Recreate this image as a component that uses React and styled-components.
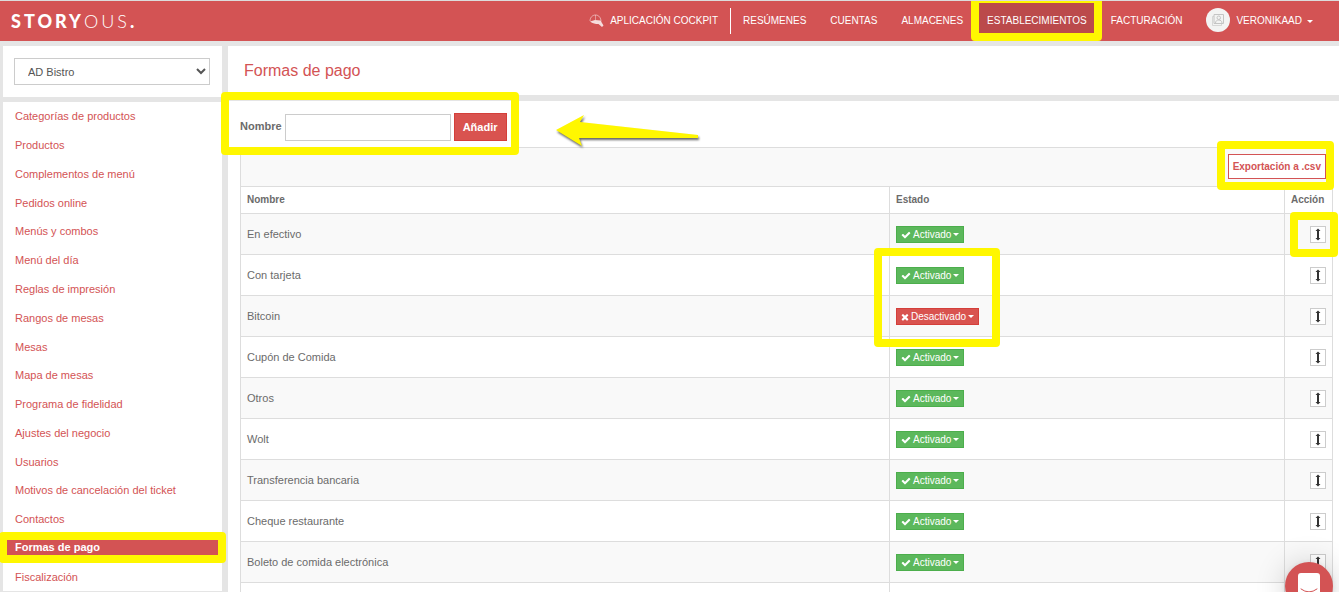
import React from "react";
import styled, { createGlobalStyle, css } from "styled-components";

const red = "#d35354";
const yellow = "#fff700";
const line = "#dddddd";

const GlobalStyle = createGlobalStyle`
  *, *::before, *::after { box-sizing: border-box; }
  body {
    margin: 0;
    background: #e5e5e5;
    color: #6b6b6b;
    font: 11px/16px "Liberation Sans", Arial, sans-serif;
  }
  button, input, select { font: inherit; color: inherit; }
  a { color: inherit; text-decoration: none; }
`;

const Page = styled.div`
  display: flex;
  flex-direction: column;
  height: 100vh;
  overflow: hidden;
  border-top: 1px solid #dcdcdc;
`;

/* Yellow marker frame drawn around its positioned parent. */
const Marker = styled.span`
  position: absolute;
  inset: ${(p) => p.$inset};
  border: 8px solid ${yellow};
  border-radius: 4px;
  pointer-events: none;
  z-index: 2;
`;

const Header = styled.header`
  display: flex;
  flex: none;
  justify-content: space-between;
  align-items: center;
  height: 40px;
  padding: 0 26px 0 11px;
  background: ${red};
  color: #fff;
`;

const Logo = styled.a`
  font: 300 18px/24px Lato, sans-serif;
  letter-spacing: 3px;
  strong { font-weight: 900; }
`;

const Nav = styled.nav`
  display: flex;
  align-items: center;
  height: 100%;
  font-size: 10px;
`;

const NavLink = styled.a`
  position: relative;
  display: flex;
  align-items: center;
  gap: 6px;
  height: 100%;
  padding: 0 12px;
  white-space: nowrap;
  ${(p) => p.$active && css`background: #bb4a4b;`}
`;

const NavDivider = styled.span`
  width: 1px;
  height: 26px;
  background: #fff;
`;

const UserButton = styled.button`
  display: flex;
  align-items: center;
  gap: 6px;
  padding: 0 0 3px 12px;
  border: 0;
  background: none;
`;

const Avatar = styled.span`
  display: grid;
  place-items: center;
  width: 24px;
  height: 24px;
  border-radius: 50%;
  background: #f3f3f3;
`;

const UserName = styled.span`
  display: flex;
  align-items: center;
  gap: 5px;
  padding-top: 3px;
`;

const Caret = styled.span`
  border: 3px solid transparent;
  border-top-color: currentColor;
  border-bottom: 0;
`;

const Columns = styled.div`
  display: grid;
  flex: 1;
  grid-template: minmax(0, 1fr) / 219px minmax(0, 1fr);
  gap: 6px;
  min-height: 0;
  padding: 5px 0 0 3px;
`;

const Column = styled.div`
  display: flex;
  flex-direction: column;
  gap: ${(p) => p.$gap}px;
  padding-bottom: ${(p) => p.$bottom || 0}px;
`;

const SelectPanel = styled.div`
  padding: 12px 12px 12px 11px;
  background: #fff;
`;

const BranchSelect = styled.select`
  display: block;
  width: 100%;
  height: 27px;
  padding: 0 0 0 9px;
  border: 1px solid #ccc;
  background: #fff;
  color: #555;
`;

const Menu = styled.ul`
  display: flex;
  flex: 1;
  flex-direction: column;
  margin: 0;
  padding: 0 4px;
  list-style: none;
  background: #fff;
  color: ${red};
`;

const MenuItem = styled.li`
  display: flex;
  flex: 1;
  align-items: center;
`;

const MenuLink = styled.a`
  position: relative;
  flex: 1;
  padding-left: 8px;
  ${(p) => p.$active && css`
    line-height: 15px;
    background: ${red};
    color: #fff;
    font-weight: bold;
  `}
`;

const TitlePanel = styled.div`
  padding: 14px 16px;
  background: #fff;
`;

const Title = styled.h1`
  margin: 0;
  font-size: 16px;
  line-height: 21px;
  font-weight: normal;
  color: ${red};
`;

const Content = styled.main`
  position: relative;
  padding: 12px 6px 0 12px;
  background: #fff;
`;

const AddForm = styled.form`
  position: relative;
  display: flex;
  align-items: flex-end;
  gap: 3px;
  width: fit-content;
  margin-bottom: 6px;
`;

const FieldLabel = styled.label`
  align-self: flex-start;
  line-height: 26px;
  font-weight: bold;
`;

const NameInput = styled.input`
  width: 166px;
  height: 27px;
  border: 1px solid #ccc;
  background: #fff;
`;

const AddButton = styled.button`
  width: 53px;
  height: 28px;
  padding: 0;
  border: 1px solid #d43f3a;
  background: #d9534f;
  color: #fff;
  font-weight: bold;
`;

const Arrow = styled.svg`
  position: absolute;
  left: 326px;
  top: 12px;
  filter: drop-shadow(1px 2px 1px rgba(0, 0, 0, 0.6));
`;

const Toolbar = styled.div`
  display: flex;
  justify-content: flex-end;
  padding: 6px 6px 7px;
  border: 1px solid ${line};
  border-bottom: 0;
  background: #f9f9f9;
`;

const ExportButton = styled.button`
  position: relative;
  height: 25px;
  padding: 0 4px;
  border: 1px solid ${red};
  background: #fff;
  color: ${red};
  font-size: 10px;
  font-weight: bold;
`;

const Table = styled.table`
  width: 100%;
  table-layout: fixed;
  border-collapse: collapse;
`;

const HeadCell = styled.th`
  height: 27px;
  padding: 0 6px;
  border: 1px solid ${line};
  font-size: 10px;
  text-align: left;
  width: ${(p) => p.$width};
`;

const Row = styled.tr`
  &:nth-child(odd) { background: #f9f9f9; }
`;

const Cell = styled.td`
  height: 41px;
  padding: 0 6px;
  border: 1px solid ${line};
`;

const CellInner = styled.div`
  display: flex;
  justify-content: ${(p) => (p.$end ? "flex-end" : "flex-start")};
  padding-top: 1px;
`;

const StatusButton = styled.button`
  position: relative;
  display: flex;
  align-items: center;
  gap: 2px;
  height: 17px;
  padding: 0 4px;
  border: 1px solid ${(p) => (p.$off ? "#d43f3a" : "#4cae4c")};
  background: ${(p) => (p.$off ? "#d9534f" : "#5cb85c")};
  color: #fff;
  font-size: 10px;
`;

const MoveButton = styled.button`
  position: relative;
  display: grid;
  place-items: center;
  width: 16px;
  height: 17px;
  padding: 0;
  border: 1px solid #ccc;
  background: #fff;
  color: #333;
`;

const ChatButton = styled.button`
  position: fixed;
  right: 6px;
  bottom: -18px;
  z-index: 3;
  display: grid;
  place-items: center;
  width: 48px;
  height: 48px;
  padding: 0;
  border: 0;
  border-radius: 50%;
  background: ${red};
  box-shadow: 0 1px 6px rgba(0, 0, 0, 0.1), 0 2px 32px rgba(0, 0, 0, 0.2);
`;

const sections = ["RESÚMENES", "CUENTAS", "ALMACENES", "ESTABLECIMIENTOS", "FACTURACIÓN"];

const menu = [
  "Categorías de productos", "Productos", "Complementos de menú", "Pedidos online",
  "Menús y combos", "Menú del día", "Reglas de impresión", "Rangos de mesas", "Mesas",
  "Mapa de mesas", "Programa de fidelidad", "Ajustes del negocio", "Usuarios",
  "Motivos de cancelación del ticket", "Contactos", "Formas de pago", "Fiscalización",
];

const methods = [
  { name: "En efectivo", markMove: true },
  { name: "Con tarjeta", markStatus: true },
  { name: "Bitcoin", off: true },
  { name: "Cupón de Comida" },
  { name: "Otros" },
  { name: "Wolt" },
  { name: "Transferencia bancaria" },
  { name: "Cheque restaurante" },
  { name: "Boleto de comida electrónica" },
];

const CheckIcon = () => (
  <svg width="10" height="10" viewBox="0 0 1792 1792" fill="currentColor" aria-hidden="true">
    <path d="M1671 566q0 40-28 68l-724 724-136 136q-28 28-68 28t-68-28l-136-136-362-362q-28-28-28-68t28-68l136-136q28-28 68-28t68 28l294 295 656-657q28-28 68-28t68 28l136 136q28 28 28 68z" />
  </svg>
);

const CrossIcon = () => (
  <svg width="8" height="10" viewBox="192 0 1408 1792" fill="currentColor" aria-hidden="true">
    <path d="M1490 1322q0 40-28 68l-136 136q-28 28-68 28t-68-28l-294-294-294 294q-28 28-68 28t-68-28l-136-136q-28-28-28-68t28-68l294-294-294-294q-28-28-28-68t28-68l136-136q28-28 68-28t68 28l294 294 294-294q28-28 68-28t68 28l136 136q28 28 28 68t-28 68l-294 294 294 294q28 28 28 68z" />
  </svg>
);

const CockpitIcon = () => (
  <svg width="15" height="14" viewBox="0 0 15 14" fill="none" aria-hidden="true">
    <path d="M1 7C1 3.500 3.500 1 6.500 1C10 1 12 4 12 7.500" stroke="#fff" strokeOpacity="0.5" />
    <path d="M6.500 1V6" stroke="#fff" strokeOpacity="0.4" />
    <path d="M1 7.500L6 6L11.500 6.500L14.500 11.500L13 13L9.500 10C6.500 10 3.500 9.500 1 7.500Z" fill="#fff" fillOpacity="0.8" />
  </svg>
);

const PersonIcon = () => (
  <svg width="14" height="14" viewBox="0 0 14 14" fill="none" stroke="#c4c4c4" aria-hidden="true">
    <path d="M3 1.500H12.500V10.500H3Z" />
    <path d="M3 3.500H1.500V12.500H10.500V10.500" strokeOpacity="0.6" />
    <circle cx="7.750" cy="4.750" r="1.750" />
    <path d="M4.500 10C4.500 8 6 7 7.750 7S11 8 11 10" />
  </svg>
);

const MoveIcon = () => (
  <svg width="6" height="13" viewBox="0 0 6 13" aria-hidden="true">
    <path d="M3 0.500L5.500 3H4V10H5.500L3 12.500L0.500 10H2V3H0.500Z" fill="currentColor" />
  </svg>
);

export default function App() {
  return (
    <Page>
      <GlobalStyle />
      <Header>
        <Logo href="#"><strong>STORY</strong>OUS<strong>.</strong></Logo>
        <Nav>
          <NavLink href="#"><CockpitIcon />APLICACIÓN COCKPIT</NavLink>
          <NavDivider />
          {sections.map((label) => {
            const active = label === "ESTABLECIMIENTOS";
            return (
              <NavLink key={label} href="#" $active={active}>
                {label}
                {active && <Marker $inset="-6px -3px 0 -4px" />}
              </NavLink>
            );
          })}
          <UserButton type="button">
            <Avatar><PersonIcon /></Avatar>
            <UserName>VERONIKAAD <Caret /></UserName>
          </UserButton>
        </Nav>
      </Header>

      <Columns>
        <Column $gap={5} $bottom={1}>
          <SelectPanel>
            <BranchSelect aria-label="Establecimiento" defaultValue="AD Bistro">
              <option>AD Bistro</option>
            </BranchSelect>
          </SelectPanel>
          <Menu>
            {menu.map((label) => {
              const active = label === "Formas de pago";
              return (
                <MenuItem key={label}>
                  <MenuLink href="#" $active={active}>
                    {label}
                    {active && <Marker $inset="-8px" />}
                  </MenuLink>
                </MenuItem>
              );
            })}
          </Menu>
        </Column>

        <Column $gap={6}>
          <TitlePanel><Title>Formas de pago</Title></TitlePanel>
          <Content>
            <AddForm onSubmit={(e) => e.preventDefault()}>
              <FieldLabel htmlFor="nombre">Nombre</FieldLabel>
              <NameInput id="nombre" type="text" />
              <AddButton type="submit">Añadir</AddButton>
              <Marker $inset="-21px -12px -14px -19px" />
            </AddForm>
            <Arrow width="148" height="36" viewBox="0 0 148 36" aria-hidden="true">
              <path d="M2 17L30 2L26 9L144 22V25L25 25L28 33Z" fill={yellow} />
            </Arrow>
            <Toolbar>
              <ExportButton type="button">
                Exportación a .csv
                <Marker $inset="-14px -9px -12px -12px" />
              </ExportButton>
            </Toolbar>
            <Table>
              <thead>
                <tr>
                  <HeadCell>Nombre</HeadCell>
                  <HeadCell $width="395px">Estado</HeadCell>
                  <HeadCell $width="48px">Acción</HeadCell>
                </tr>
              </thead>
              <tbody>
                {methods.map((m) => (
                  <Row key={m.name}>
                    <Cell>{m.name}</Cell>
                    <Cell>
                      <CellInner>
                        <StatusButton type="button" $off={m.off}>
                          {m.off ? <CrossIcon /> : <CheckIcon />}
                          {m.off ? "Desactivado" : "Activado"} <Caret />
                          {m.markStatus && <Marker $inset="-20px -37px -64px -23px" />}
                        </StatusButton>
                      </CellInner>
                    </Cell>
                    <Cell>
                      <CellInner $end>
                        <MoveButton type="button" aria-label="Mover">
                          <MoveIcon />
                          {m.markMove && <Marker $inset="-15px -13px -15px -21px" />}
                        </MoveButton>
                      </CellInner>
                    </Cell>
                  </Row>
                ))}
                <Row><Cell /><Cell /><Cell /></Row>
              </tbody>
            </Table>
          </Content>
        </Column>
      </Columns>

      <ChatButton type="button" aria-label="Chat">
        <svg width="22" height="26" viewBox="0 0 22 26" aria-hidden="true">
          <path d="M3 0H19Q22 0 22 3V26L16 22H3Q0 22 0 19V3Q0 0 3 0Z" fill="#fff" />
          <path d="M3 16Q11 22 19 16" fill="none" stroke={red} strokeLinecap="round" />
        </svg>
      </ChatButton>
    </Page>
  );
}
